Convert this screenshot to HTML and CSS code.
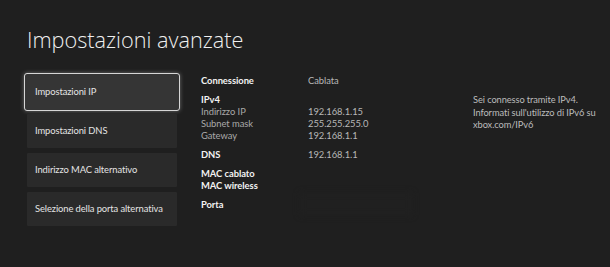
FILE: index.html
```html
<!DOCTYPE html>
<html lang="it">
<head>
<meta charset="utf-8">
<link rel="stylesheet" href="styles.css">
</head>
<body>
<div class="page">
  <h1 class="title">Impostazioni avanzate</h1>
  <div class="main">
    <nav class="menu">
      <div class="item selected">Impostazioni IP</div>
      <div class="item">Impostazioni DNS</div>
      <div class="item">Indirizzo MAC alternativo</div>
      <div class="item">Selezione della porta alternativa</div>
    </nav>
    <div class="details">
      <div class="group">
        <div class="row"><span class="label strong">Connessione</span><span class="value">Cablata</span></div>
      </div>
      <div class="group">
        <div class="row"><span class="label strong">IPv4</span><span class="value"></span></div>
        <div class="row"><span class="label">Indirizzo IP</span><span class="value">192.168.1.15</span></div>
        <div class="row"><span class="label">Subnet mask</span><span class="value">255.255.255.0</span></div>
        <div class="row"><span class="label">Gateway</span><span class="value">192.168.1.1</span></div>
      </div>
      <div class="group">
        <div class="row"><span class="label strong">DNS</span><span class="value">192.168.1.1</span></div>
      </div>
      <div class="group">
        <div class="row"><span class="label strong">MAC cablato</span><span class="value"></span></div>
        <div class="row"><span class="label strong">MAC wireless</span><span class="value"></span></div>
      </div>
      <div class="group">
        <div class="row"><span class="label strong">Porta</span><span class="value"><span class="blur"></span></span></div>
      </div>
    </div>
    <p class="note">Sei connesso tramite IPv4.<br>Informati sull'utilizzo di IPv6 su<br>xbox.com/IPv6</p>
  </div>
</div>
</body>
</html>
```

FILE: styles.css
```css
html, body {
  margin: 0;
  padding: 0;
  background: #1f1f1f;
  width: 610px;
  height: 267px;
  overflow: hidden;
}
.page {
  font-family: "Lato", "Open Sans", sans-serif;
  color: #e6e6e6;
  padding: 26px 0 0 27px;
}
.title {
  margin: 0;
  font-family: "Open Sans", "Noto Sans", sans-serif;
  font-weight: 300;
  font-size: 21.7px;
  line-height: 28px;
  color: #f0f0f0;
}
.main {
  display: flex;
  margin-top: 21px;
}
.menu {
  display: flex;
  flex-direction: column;
  gap: 5px;
  width: 150px;
  flex: none;
}
.item {
  height: 34px;
  background: #2a2a2a;
  font-size: 9.4px;
  letter-spacing: -0.1px;
  line-height: 34px;
  padding-left: 8px;
  color: #e4e4e4;
  border-radius: 1px;
}
.item.selected {
  height: 38px;
  line-height: 36px;
  margin: -2px -3px -2px -3px;
  padding-left: 10px;
  background: #353535;
  box-sizing: border-box;
  border: 1.5px solid #d6d6d6;
  border-radius: 3px;
  box-shadow: 0 0 4px rgba(255,255,255,0.35);
}
.details {
  margin-left: 24px;
  width: 210px;
  flex: none;
  font-size: 9.4px;
  letter-spacing: -0.05px;
}
.group {
  margin-bottom: 7px;
}
.row {
  display: flex;
  height: 12px;
  line-height: 12px;
}
.label {
  width: 107px;
  color: #a9a9a9;
}
.label.strong {
  color: #f2f2f2;
  font-weight: 700;
}
.value {
  color: #b8b8b8;
  position: relative;
}
.blur {
  position: absolute;
  left: -8px;
  top: -6px;
  width: 112px;
  height: 22px;
  background: #202020;
  filter: blur(3px);
}
.note {
  margin: 19px 0 0 62px;
  font-size: 9.3px;
  letter-spacing: -0.1px;
  line-height: 12.5px;
  color: #bcbcbc;
}
```
